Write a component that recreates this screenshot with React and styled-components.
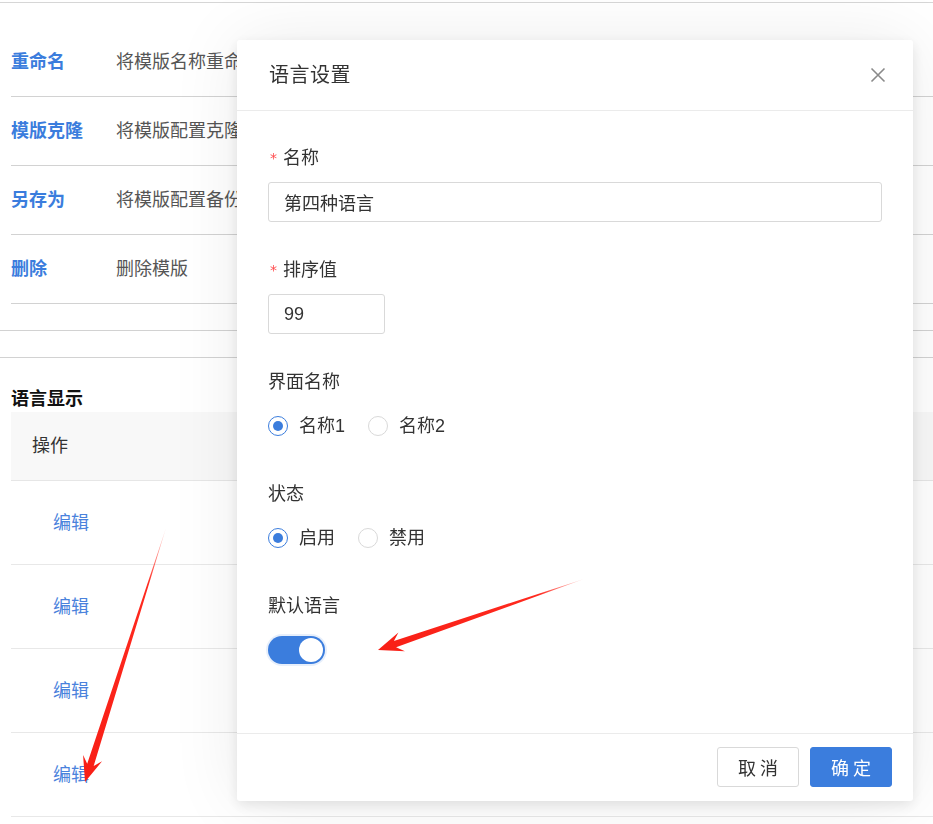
import React, { useState } from 'react';
import styled, { createGlobalStyle } from 'styled-components';

const GlobalStyle = createGlobalStyle`
	html, body {
		margin: 0;
		padding: 0;
		background: #fff;
		overflow: hidden;
	}
	body {
		font-family: "Liberation Sans", "Noto Sans CJK SC", sans-serif;
		color: #333;
	}
`;

const BLUE = '#3b7ddd';

const actions = [
	{ name: '重命名', desc: '将模版名称重命名' },
	{ name: '模版克隆', desc: '将模版配置克隆为新模版' },
	{ name: '另存为', desc: '将模版配置备份为新模版' },
	{ name: '删除', desc: '删除模版' },
];

// red annotation arrows drawn over the screenshot
const arrows = [
	{ from: [166, 528], to: [85, 782] },
	{ from: [584, 579], to: [378, 650] },
];

const arrowPoints = ({ from, to }) => {
	const dx = to[0] - from[0];
	const dy = to[1] - from[1];
	const len = Math.hypot(dx, dy);
	const ux = dx / len;
	const uy = dy / len;
	const px = -uy;
	const py = ux;
	const head = 25;
	const neck = 18;
	const at = (back, side) => [to[0] - ux * back + px * side, to[1] - uy * back + py * side];
	const pts = [from, at(neck, 3.4), at(head, 10), to, at(head, -10), at(neck, -3.4)];
	return pts.map((p) => p.map((v) => v.toFixed(1)).join(',')).join(' ');
};

export default function App() {
	const [uiName, setUiName] = useState('1');
	const [status, setStatus] = useState('on');
	const [isDefault, setDefault] = useState(true);

	return (
		<>
			<GlobalStyle />
			<Page>
				<ActionList>
					{actions.map((a) => (
						<ActionRow key={a.name}>
							<ActionName>{a.name}</ActionName>
							<ActionDesc>{a.desc}</ActionDesc>
						</ActionRow>
					))}
				</ActionList>
				<SectionRule />
				<SectionRule />
				<SectionTitle>语言显示</SectionTitle>
				<Table>
					<HeadRow>
						<HeadCell>操作</HeadCell>
					</HeadRow>
					{[0, 1, 2, 3].map((i) => (
						<BodyRow key={i}>
							<EditLink>编辑</EditLink>
						</BodyRow>
					))}
				</Table>
			</Page>

			<Dialog>
				<DialogHeader>
					<DialogTitle>语言设置</DialogTitle>
					<CloseButton aria-label="close">
						<svg width="16" height="16" viewBox="0 0 16 16">
							<path d="M1.5 1.5 L14.5 14.5 M14.5 1.5 L1.5 14.5" stroke="#8a8a8a" strokeWidth="1.6" fill="none" />
						</svg>
					</CloseButton>
				</DialogHeader>

				<DialogBody>
					<FormItem>
						<Label required>名称</Label>
						<Control>
							<Input defaultValue="第四种语言" />
						</Control>
					</FormItem>
					<FormItem>
						<Label required>排序值</Label>
						<Control>
							<Input defaultValue="99" $width="117px" />
						</Control>
					</FormItem>
					<FormItem>
						<Label>界面名称</Label>
						<Control>
							<RadioGroup>
								<RadioOption onClick={() => setUiName('1')}>
									<RadioDot $checked={uiName === '1'} />
									名称1
								</RadioOption>
								<RadioOption onClick={() => setUiName('2')}>
									<RadioDot $checked={uiName === '2'} />
									名称2
								</RadioOption>
							</RadioGroup>
						</Control>
					</FormItem>
					<FormItem>
						<Label>状态</Label>
						<Control>
							<RadioGroup>
								<RadioOption onClick={() => setStatus('on')}>
									<RadioDot $checked={status === 'on'} />
									启用
								</RadioOption>
								<RadioOption onClick={() => setStatus('off')}>
									<RadioDot $checked={status === 'off'} />
									禁用
								</RadioOption>
							</RadioGroup>
						</Control>
					</FormItem>
					<FormItem>
						<Label>默认语言</Label>
						<Control>
							<Switch $on={isDefault} onClick={() => setDefault(!isDefault)} />
						</Control>
					</FormItem>
				</DialogBody>

				<DialogFooter>
					<Button>取 消</Button>
					<Button $primary>确 定</Button>
				</DialogFooter>
			</Dialog>

			<Annotations width="933" height="824" viewBox="0 0 933 824">
				<defs>
					{arrows.map((a, i) => (
						<linearGradient
							key={i}
							id={`fade${i}`}
							gradientUnits="userSpaceOnUse"
							x1={a.from[0]}
							y1={a.from[1]}
							x2={a.to[0]}
							y2={a.to[1]}
						>
							<stop offset="0" stopColor="#ff2a1f" stopOpacity="0.15" />
							<stop offset="0.22" stopColor="#ff2a1f" stopOpacity="1" />
							<stop offset="1" stopColor="#f81f16" stopOpacity="1" />
						</linearGradient>
					))}
				</defs>
				{arrows.map((a, i) => (
					<polygon key={i} points={arrowPoints(a)} fill={`url(#fade${i})`} />
				))}
			</Annotations>
		</>
	);
}

const Page = styled('div')`
	border-top: 1px solid #d6d6d6;
	margin-top: 2px;
	font-size: 18px;
`;

const ActionList = styled('div')`
	padding: 25px 0 0 11px;
`;

const ActionRow = styled('div')`
	display: flex;
	align-items: center;
	height: 68px;
	border-bottom: 1px solid #d2d2d2;
`;

const ActionName = styled('span')`
	width: 105px;
	color: ${BLUE};
	font-weight: bold;
	line-height: 24px;
`;

const ActionDesc = styled('span')`
	color: #555;
	line-height: 24px;
`;

const SectionRule = styled('div')`
	height: 26px;
	border-bottom: 1px solid #d2d2d2;
`;

const SectionTitle = styled('div')`
	padding: 28px 0 0 11px;
	line-height: 26px;
	font-weight: bold;
	color: #111;
`;

const Table = styled('div')`
	margin-left: 11px;
`;

const HeadRow = styled('div')`
	display: flex;
	align-items: center;
	height: 68px;
	padding-left: 21px;
	background: #f8f8f8;
	border-bottom: 1px solid #e6e6e6;
	color: #333;
`;

const HeadCell = styled('span')`
	line-height: 24px;
`;

const BodyRow = styled('div')`
	display: flex;
	align-items: center;
	height: 83px;
	padding-left: 42px;
	border-bottom: 1px solid #e8e8e8;
`;

const EditLink = styled('a')`
	color: #4a82dc;
	line-height: 24px;
	cursor: pointer;
`;

const Dialog = styled('div')`
	position: fixed;
	left: 237px;
	top: 40px;
	width: 676px;
	height: 761px;
	display: flex;
	flex-direction: column;
	background: #fff;
	border-radius: 3px;
	box-shadow: 0 4px 14px rgba(0, 0, 0, 0.1), 0 0 70px rgba(0, 0, 0, 0.08);
	font-size: 18px;
`;

const DialogHeader = styled('div')`
	display: flex;
	align-items: center;
	justify-content: space-between;
	height: 70px;
	padding: 0 27px 0 32px;
	border-bottom: 1px solid #ebebeb;
`;

const DialogTitle = styled('div')`
	font-size: 20px;
	color: #333;
	line-height: 28px;
	letter-spacing: 0.5px;
`;

const CloseButton = styled('button')`
	display: flex;
	padding: 0;
	border: none;
	background: none;
	cursor: pointer;
`;

const DialogBody = styled('div')`
	flex: 1;
	padding: 33px 31px 0;
`;

const FormItem = styled('div')`
	margin-bottom: 34px;
`;

const Label = styled('div')`
	display: flex;
	align-items: center;
	height: 24px;
	margin-bottom: 14px;
	color: #333;

	${(p) =>
		p.required &&
		`
		&:before {
			content: '*';
			color: #ff4d4f;
			font-size: 14px;
			margin: 3px 6px 0 2px;
			font-family: "DejaVu Sans", sans-serif;
		}
	`}
`;

const Control = styled('div')`
	display: flex;
	align-items: center;
	height: 40px;
`;

const Input = styled('input')`
	box-sizing: border-box;
	width: ${(p) => p.$width || '100%'};
	height: 40px;
	padding: 0 15px;
	border: 1px solid #d9d9d9;
	border-radius: 3px;
	font: inherit;
	font-size: 18px;
	color: #333;
	outline: none;
`;

const RadioGroup = styled('div')`
	display: flex;
	align-items: center;
	gap: 23px;
`;

const RadioOption = styled('label')`
	display: flex;
	align-items: center;
	gap: 11px;
	color: #333;
	line-height: 24px;
	cursor: pointer;
`;

const RadioDot = styled('span')`
	position: relative;
	box-sizing: border-box;
	width: 20px;
	height: 20px;
	border-radius: 50%;
	border: 1px solid ${(p) => (p.$checked ? BLUE : '#d9d9d9')};
	background: #fff;

	&:after {
		content: '';
		position: absolute;
		left: 4px;
		top: 4px;
		width: 10px;
		height: 10px;
		border-radius: 50%;
		background: ${BLUE};
		display: ${(p) => (p.$checked ? 'block' : 'none')};
	}
`;

const Switch = styled('button')`
	position: relative;
	width: 57px;
	height: 28px;
	padding: 0;
	border: none;
	border-radius: 14px;
	background: ${(p) => (p.$on ? BLUE : '#bfbfbf')};
	box-shadow: 0 0 0 2px rgba(59, 125, 221, 0.12);
	cursor: pointer;

	&:after {
		content: '';
		position: absolute;
		top: 2px;
		left: ${(p) => (p.$on ? '31px' : '2px')};
		width: 24px;
		height: 24px;
		border-radius: 50%;
		background: #fff;
	}
`;

const DialogFooter = styled('div')`
	display: flex;
	justify-content: flex-end;
	gap: 11px;
	padding: 13px 21px 14px;
	border-top: 1px solid #ebebeb;
`;

const Button = styled('button')`
	width: 82px;
	height: 40px;
	border-radius: 3px;
	border: 1px solid ${(p) => (p.$primary ? BLUE : '#d9d9d9')};
	background: ${(p) => (p.$primary ? BLUE : '#fff')};
	color: ${(p) => (p.$primary ? '#fff' : '#333')};
	font-family: "Noto Sans CJK SC", sans-serif;
	font-size: 18px;
	cursor: pointer;
`;

const Annotations = styled('svg')`
	position: fixed;
	left: 0;
	top: 0;
	pointer-events: none;
`;
